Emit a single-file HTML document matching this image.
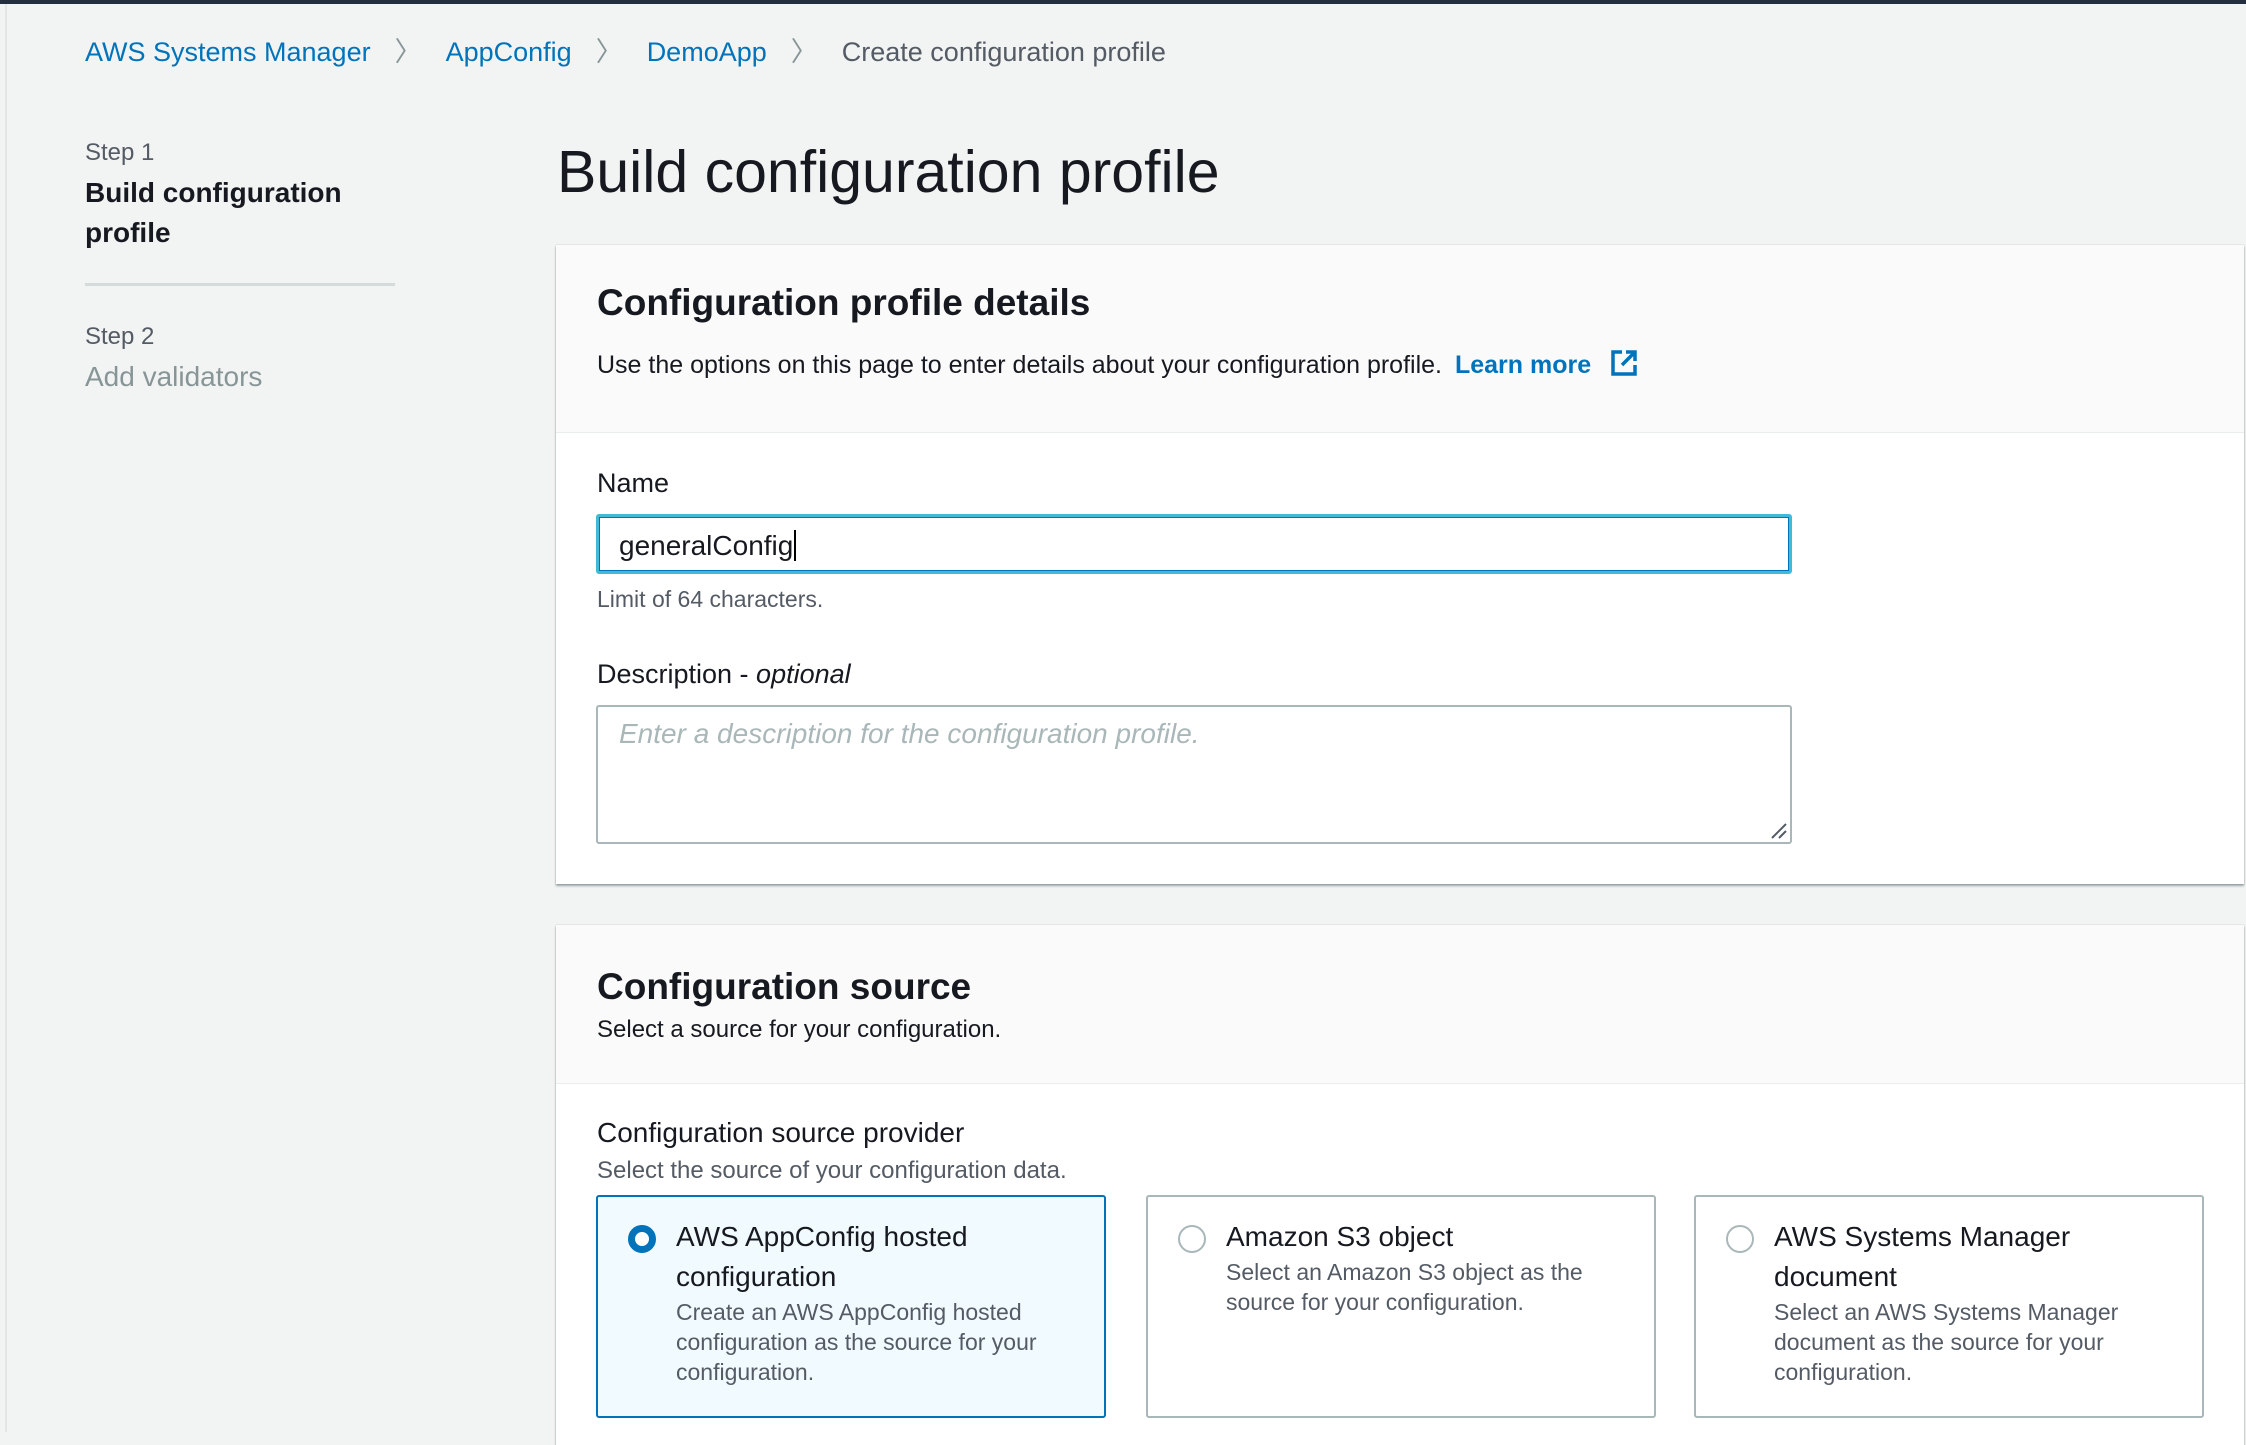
<!DOCTYPE html>
<html><head><meta charset="utf-8"><style>
*{margin:0;padding:0;box-sizing:border-box}
body{width:2246px;height:1432px;overflow:hidden;background:#f2f3f3;font-family:"Liberation Sans",sans-serif;position:relative;color:#16191f}
.a{position:absolute;white-space:nowrap}
.lnk{color:#0073bb}
.card{position:absolute;left:556px;width:1688px;background:#fff;box-shadow:0 2px 2px rgba(0,28,36,.35),0 0 1px rgba(0,28,36,.3)}
.hd{background:#fafafa;border-bottom:1px solid #eaeded}
.tile{position:absolute;top:1195px;height:223px;width:510px;border:2px solid #aab7b8;border-radius:3px;background:#fff}
.tile.sel{background:#f1faff;border-color:#0073bb}
.radio{position:absolute;left:30px;top:28px;width:28px;height:28px;border-radius:50%;border:2px solid #aab7b8;background:#fff}
.sel .radio{border:7px solid #0073bb}
.tt{position:absolute;left:78px;top:20px;font-size:28px;line-height:40px;color:#16191f;white-space:normal;width:410px}
.td{font-size:23px;line-height:30px;color:#545b64}
</style></head><body>
<div class="a" style="left:0;top:0;width:2246px;height:4px;background:#232f3e"></div>
<div class="a" style="left:5px;top:4px;width:2px;height:1428px;background:#e4e6e6"></div>
<div class="a" style="left:85px;top:34px;font-size:27px;line-height:36px"><span class="lnk">AWS Systems Manager</span><span style="color:#879596;margin:0 24px">〉</span><span class="lnk">AppConfig</span><span style="color:#879596;margin:0 24px">〉</span><span class="lnk">DemoApp</span><span style="color:#879596;margin:0 24px">〉</span><span style="color:#545b64">Create configuration profile</span></div>
<div class="a" style="left:85px;top:139px;font-size:24px;color:#545b64">Step 1</div>
<div class="a" style="left:85px;top:173px;font-size:28px;line-height:40px;font-weight:bold;color:#16191f;white-space:normal;width:300px">Build configuration profile</div>
<div class="a" style="left:85px;top:283px;width:310px;height:3px;background:#d5dbdb"></div>
<div class="a" style="left:85px;top:323px;font-size:24px;color:#545b64">Step 2</div>
<div class="a" style="left:85px;top:361px;font-size:28px;color:#879596">Add validators</div>
<div class="a" style="left:557px;top:138px;font-size:59px;line-height:68px;color:#16191f">Build configuration profile</div>

<div class="card" style="top:245px;height:639px">
 <div class="hd" style="height:188px"></div>
</div>
<div class="a" style="left:597px;top:282px;font-size:37px;font-weight:bold">Configuration profile details</div>
<div class="a" style="left:597px;top:349px;font-size:25px;color:#16191f">Use the options on this page to enter details about your configuration profile. <b class="lnk" style="margin-left:6px">Learn more</b>
<svg width="28" height="28" viewBox="0 0 28 28" style="vertical-align:-4px;margin-left:12px"><path d="M12 3H3v22h22v-9" fill="none" stroke="#0073bb" stroke-width="3.5"/><path d="M16 3h9v9M25 3L12 16" fill="none" stroke="#0073bb" stroke-width="3.5"/></svg></div>
<div class="a" style="left:597px;top:468px;font-size:27px">Name</div>
<div class="a" style="left:596px;top:514px;width:1196px;height:60px;border:3px solid #44b9d6;border-radius:3px;background:#fff;box-shadow:0 0 0 1px #0073bb inset"></div>
<div class="a" style="left:619px;top:530px;font-size:28px">generalConfig<span style="border-left:2px solid #000;margin-left:1px"></span></div>
<div class="a" style="left:597px;top:586px;font-size:23px;color:#545b64">Limit of 64 characters.</div>
<div class="a" style="left:597px;top:659px;font-size:27px">Description - <i>optional</i></div>
<div class="a" style="left:596px;top:705px;width:1196px;height:139px;border:2px solid #aab7b8;border-radius:3px;background:#fff"></div>
<div class="a" style="left:619px;top:718px;font-size:28px;font-style:italic;color:#aab7b8">Enter a description for the configuration profile.</div>
<svg class="a" style="left:1770px;top:822px" width="18" height="18"><path d="M2 16L16 2M9 16L16 9" stroke="#545b64" stroke-width="2"/></svg>

<div class="card" style="top:925px;height:520px">
 <div class="hd" style="height:159px"></div>
</div>
<div class="a" style="left:597px;top:966px;font-size:37px;font-weight:bold">Configuration source</div>
<div class="a" style="left:597px;top:1016px;font-size:24px">Select a source for your configuration.</div>
<div class="a" style="left:597px;top:1117px;font-size:28px">Configuration source provider</div>
<div class="a" style="left:597px;top:1157px;font-size:24px;color:#545b64">Select the source of your configuration data.</div>

<div class="tile sel" style="left:596px"><div class="radio"></div><div class="tt">AWS AppConfig hosted configuration<div class="td">Create an AWS AppConfig hosted configuration as the source for your configuration.</div></div></div>
<div class="tile" style="left:1146px"><div class="radio"></div><div class="tt">Amazon S3 object<div class="td">Select an Amazon S3 object as the source for your configuration.</div></div></div>
<div class="tile" style="left:1694px"><div class="radio"></div><div class="tt">AWS Systems Manager document<div class="td">Select an AWS Systems Manager document as the source for your configuration.</div></div></div>
</body></html>
